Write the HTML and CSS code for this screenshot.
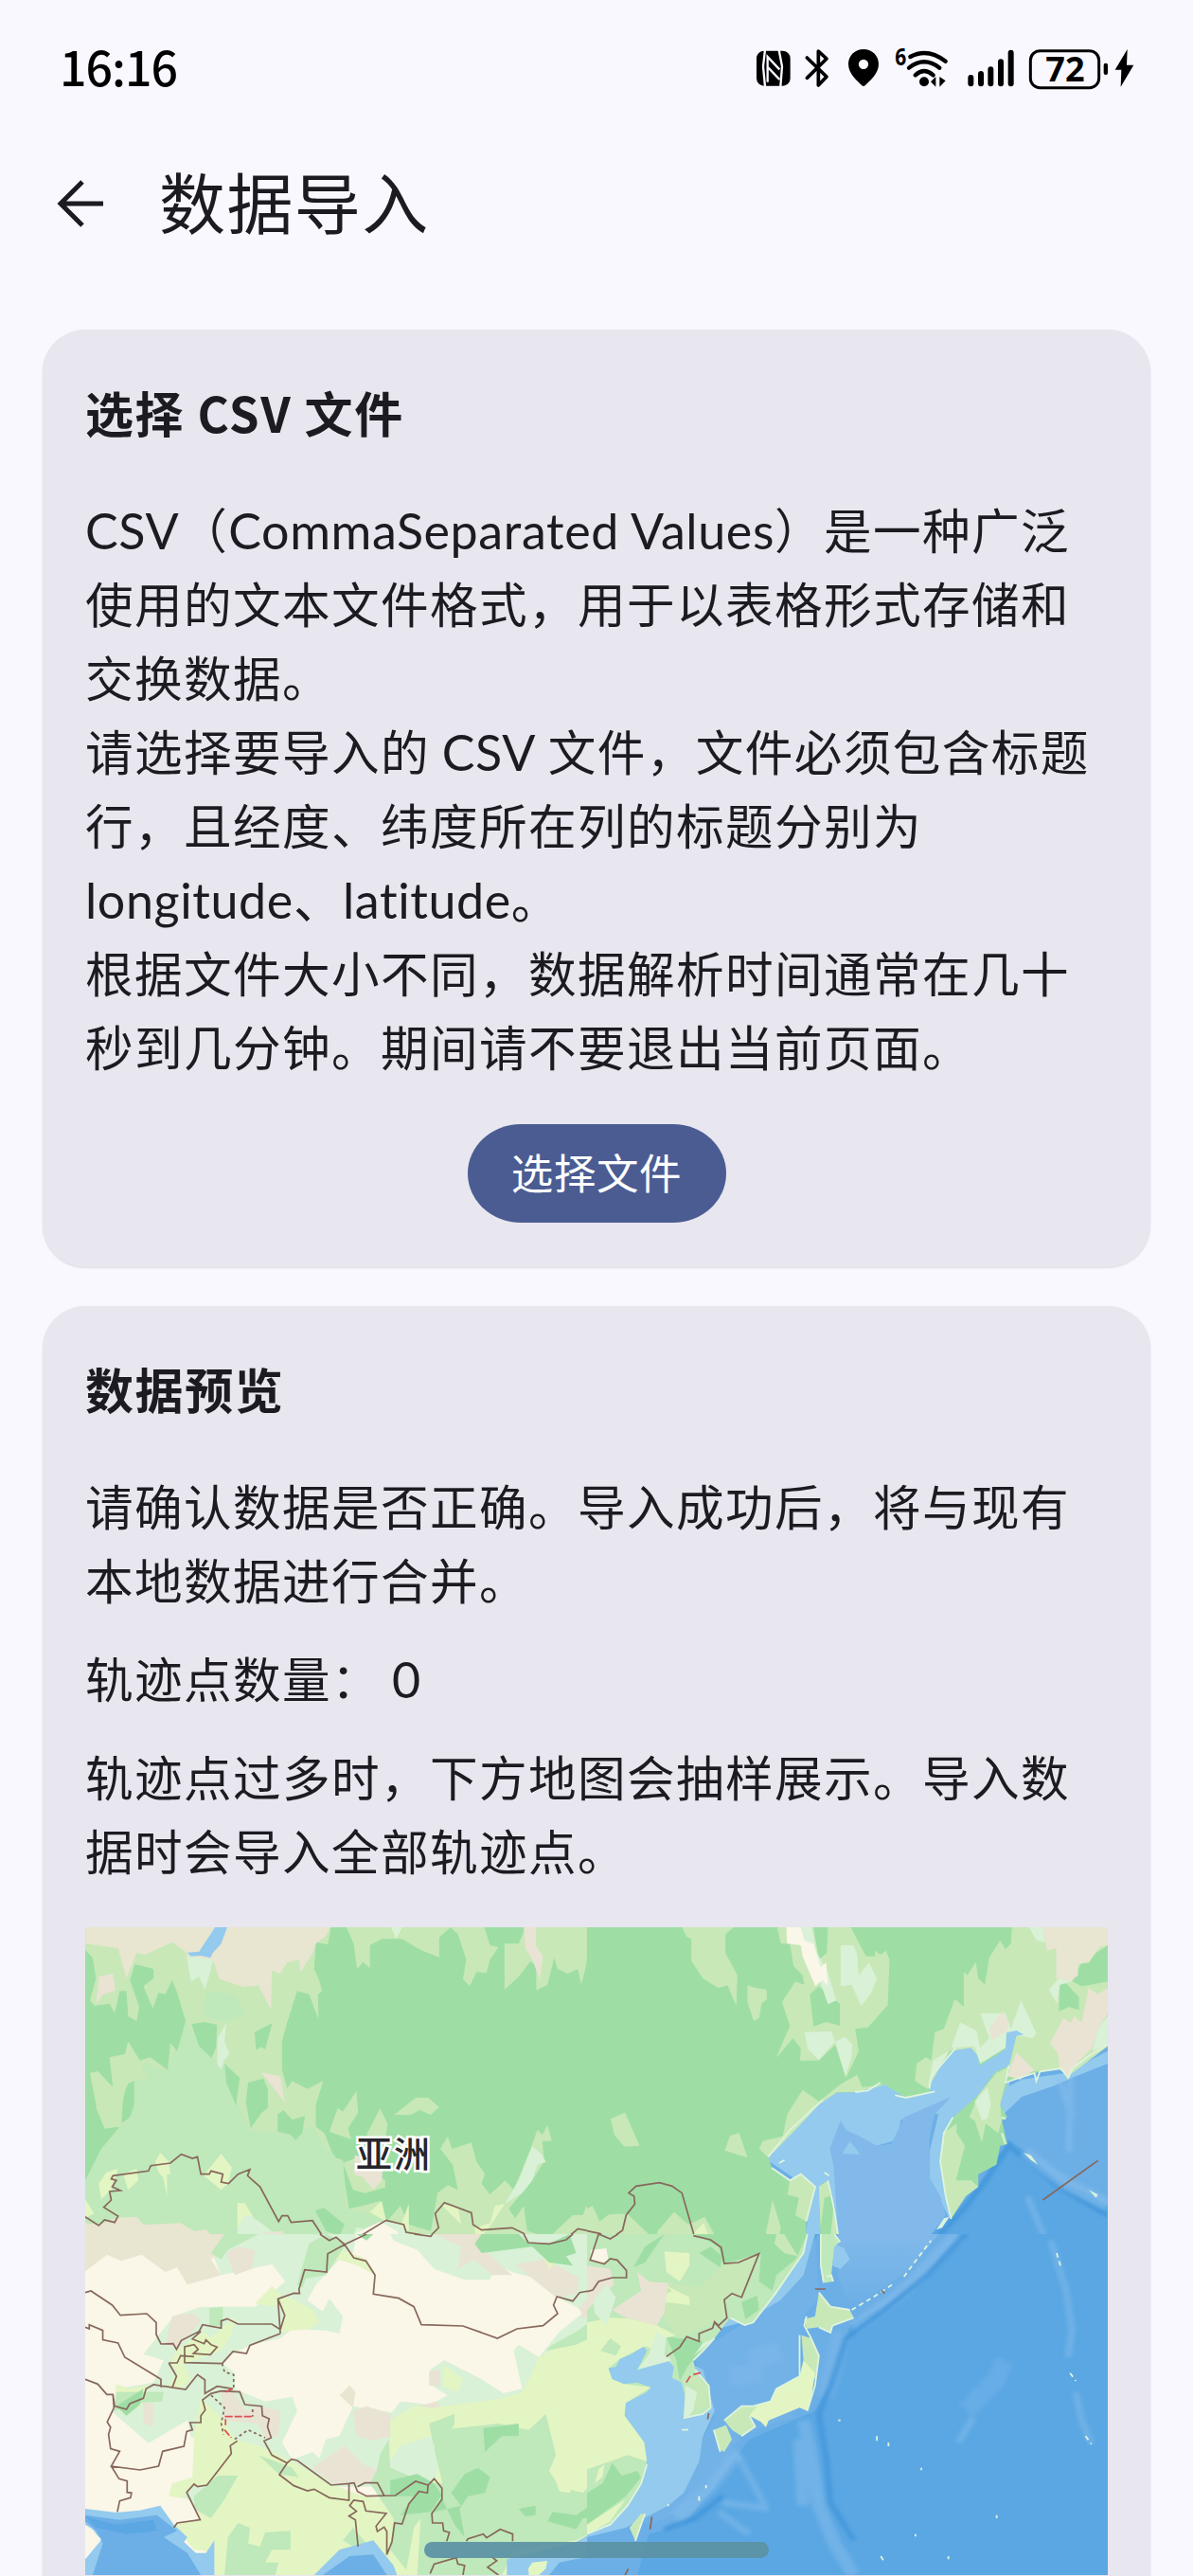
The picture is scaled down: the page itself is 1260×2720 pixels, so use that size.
FILE: index.html
```html
<!DOCTYPE html>
<html lang="zh-CN">
<head>
  <meta charset="UTF-8">
  <meta name="viewport" content="width=device-width, initial-scale=1.0">
  <title>数据导入</title>
  <link rel="stylesheet" href="styles.css">
</head>
<body>
  <div class="status-bar">
    <span class="clock">16:16</span>
    <svg class="status-icons" viewBox="84 60 1200 135">
      <!-- nfc -->
      <rect x="87" y="71" width="107" height="111" rx="24"/>
      <path class="cut" d="M114 68 108 120 114 184M158 68 168 120 163 184M122 170V90L160 130M124 124 160 162"/>
      <!-- bluetooth -->
      <path class="line" d="M247 93 309 153 283 180V72L309 96 247 157"/>
      <!-- location -->
      <path fill-rule="evenodd" d="M426 66c28 0 48 21 48 47 0 31-30 54-43 68q-5 4-10 0c-13-14-43-37-43-68 0-26 20-47 48-47zM426 98a15 15 0 1 0 0 31 15 15 0 0 0 0-31z"/>
      <!-- wifi -->
      <path class="line wifi" d="M574 90Q628 60 686 104M570 125Q618 87 667 125M590 148Q618 122 647 148"/>
      <circle cx="618" cy="169" r="15"/>
      <path d="M655 153V185L639 169zM667 153V185L686 166z"/>
      <text class="wifi-gen" x="526" y="117" textLength="36" lengthAdjust="spacingAndGlyphs">6</text>
      <!-- signal -->
      <path class="bar" d="M766 156V175M798 144V175M829 130V175M861 106V175M893 77V175"/>
      <!-- battery -->
      <rect class="cell" x="955" y="71" width="217" height="117" rx="30"/>
      <rect x="1187" y="110" width="13" height="37" rx="6"/>
      <text class="level" x="1003" y="168">72</text>
      <path d="M1262 66 1223 131H1243L1241 185 1282 116H1260z"/>
    </svg>
  </div>

  <header class="top-bar">
    <svg class="back" viewBox="0 0 52 52"><path d="M28 3 5 26 28 49M5 26H50"/></svg>
    <h1>数据导入</h1>
  </header>

  <main>
    <section class="card">
      <h2>选择 CSV 文件</h2>
      <p><span class="latin">CSV</span>（<span class="latin">CommaSeparated Values</span>）是一种广泛<br>使用的文本文件格式，用于以表格形式存储和<br>交换数据。<br>请选择要导入的 <span class="latin">CSV</span> 文件，文件必须包含标题<br>行，且经度、纬度所在列的标题分别为<br><span class="latin">longitude</span>、<span class="latin">latitude</span>。<br>根据文件大小不同，数据解析时间通常在几十<br>秒到几分钟。期间请不要退出当前页面。</p>
      <button class="pick-btn">选择文件</button>
    </section>

    <section class="card">
      <h2>数据预览</h2>
      <p>请确认数据是否正确。导入成功后，将与现有<br>本地数据进行合并。</p>
      <p>轨迹点数量：<span class="count">0</span></p>
      <p>轨迹点过多时，下方地图会抽样展示。导入数<br>据时会导入全部轨迹点。</p>

      <svg class="map" viewBox="90 2036 1080 684">
        <defs>
          <linearGradient id="okhotsk" x1="0" y1="0" x2="0" y2="1">
            <stop offset="0" stop-color="#81b9ea"/>
            <stop offset="1" stop-color="#6cafe6"/>
          </linearGradient>
        </defs>

        <!-- north west tile -->
        <svg x="80" y="2020" width="560" height="350" viewBox="0 0 1568 1050" preserveAspectRatio="none">
          <rect class="forest" width="1568" height="1050"/>
          <path class="grass" d="M28 48H755L745 103 710 95 705 180 720 215 728 250 716 262 718 340 690 260 655 250 625 350 610 410V500L625 558 640 535 685 560 732 535 710 610V680L735 700 765 780 790 785 795 850 808 940 850 930 900 915 920 980 960 930 985 990 1050 1010 1070 890 1100 865 1130 880 1115 800 1078 750 1100 710 1113 750 1170 730 1185 790 1210 830 1200 860 1225 895 1270 850 1295 880 1345 750 1365 690 1380 705 1395 675 1408 725 1380 725 1385 790 1350 850 1280 940 1300 970 1325 930 1335 1010 1400 1030 1470 960 1500 960 1510 930 1535 970 1568 950V1050H28z"/>
          <path class="meadow" d="M325 350 345 380 400 460 440 490 475 600 515 690 620 700 700 680 740 750 790 790 800 940 880 960 920 985 850 1020 780 1050H28V840L75 750 160 650 175 540 200 480 270 500zM385 250 470 260 500 320 440 350 380 330z"/>
          <path class="forest" d="M28 120 50 145 60 210 42 280 55 297 100 290 115 320 130 250H150L155 330 180 345 188 300 160 215 175 165 230 180V210L200 235 228 305 245 255 265 260 285 215 300 255 325 345 300 440 280 415 272 500 220 460 190 470 155 410 145 450 100 460 110 555 65 505 42 510 65 575 60 620 85 685 130 680 75 750 28 850z"/>
          <path class="forest" d="M342 355 380 348 418 357 415 430 402 462 365 425zM529 380 581 352 560 435 548 427 533 437zM440 480 485 525 474 612 445 540zM510 540 555 527 568 560V620L550 635 517 685 503 600zM597 640 615 628 640 658 678 645 670 700 650 722 635 705 597 695zM708 945 735 937 795 990 780 1025 740 1010zM135 620 150 545 173 535V610L160 650 135 670zM740 705 800 715 830 745 825 780 770 780z"/>
          <path class="grass" d="M42 510 65 505 110 555 105 460 150 450 185 475 215 530 160 530 140 580 135 672 88 687 62 620zM800 48H1128L1150 48H1208L1225 105 1250 112 1225 150 1215 192 1185 190 1165 235 1145 212 1155 150 1130 70 1108 48 1075 80V143L1020 120 965 85 905 85 870 105V178L850 158 832 180 822 100zM1268 100H1310L1330 48H1535L1515 100 1510 165 1495 230 1485 180 1455 195 1425 180 1415 145 1395 230 1362 248V170L1345 155 1310 205 1268 245zM750 695 775 620 790 632 830 567 835 635 805 685 815 720zM860 705 900 622 922 670 915 730zM942 642 1005 588 1042 588 1075 618 1050 642 1017 627 990 643z"/>
          <path class="grass" d="M790 795 825 780 915 850V872L855 890 820 880z"/>
          <path class="mint" d="M328 140H408L400 180 382 245 365 205 340 220zM445 350 440 410 455 450 438 470 430 500 418 480 420 400zM932 48H965L948 85zM1350 742 1380 770 1390 792 1365 800 1350 850 1320 890 1268 925 1310 850zM478 960 505 950 580 1010 560 1050H478zM900 980 960 985 1010 1050H930zM830 1000 850 1000 820 1030z"/>
          <path class="sand" d="M28 48H752L740 75 710 100 700 130 665 190 660 150 625 160 605 195 580 185 578 310 540 232 495 237 425 212 405 150 330 140 325 125 285 95 235 120 205 135 180 130 150 210 125 115 30 100zM28 985 70 990 120 968 180 965 200 990 310 985 350 1010 385 1005 420 1050H28z"/>
          <path class="rose" d="M68 205 110 195 118 248 80 262 60 292zM548 508 605 520 618 602 580 550zM1325 48H1362L1360 105 1382 140 1372 212 1350 150 1330 115zM825 770 910 790 905 850 880 880 850 840 822 830zM520 1040 560 1015 610 1010 640 1050z"/>
          <path class="lemon" d="M235 790 250 762 275 790 280 830 270 830V900L258 840 245 825zM68 860 90 825 125 812 105 880 75 910zM140 830 180 812 185 850 155 880zM378 835 430 765 462 810 450 860 430 880zM478 922 500 922 525 965 500 960 478 1000zM870 950 905 915 918 980zM960 995 985 925 985 1010zM1080 925 1130 935 1140 990zM1180 1000 1225 985 1240 930 1268 925 1235 980 1185 1050zM28 910 55 955 28 970zM1395 1050 1415 1020 1440 1050z"/>
          <path class="cream" d="M780 1050 840 1010 900 980 950 1010 970 1050z"/>
          <path class="shallow" d="M412 48H448L430 100 405 130 398 145 370 138 340 140 330 128 365 125z"/>
          <path class="border" d="M28 965 68 993 85 975 115 983 125 963 83 935 105 912 100 885 132 882 108 870 120 850 105 845 110 835 215 820 222 803 280 795 312 767 345 780 360 775 370 830 395 830 400 820 435 830 430 855 452 860 480 830 515 815 508 835 545 870 600 980 610 962 627 962 637 983 700 977 732 1030 760 1038 770 1025 785 1050M805 1050 918 976 970 990 977 1014 1048 1027 1073 1000 1063 955 1090 920 1170 952 1175 990 1200 1007 1290 1000 1325 1018 1338 1045 1390 1050 1450 1035 1485 1003 1568 1020M1548 1022 1540 1050"/>
          <text class="map-label" transform="scale(2.8 3)" x="296" y="269">亚洲</text>
        </svg>

        <!-- north east tile -->
        <svg x="620" y="2020" width="600" height="350" viewBox="0 0 1568 1050" preserveAspectRatio="none">
          <rect class="ocean" width="1568" height="1050"/>
          <path class="slope" d="M920 1050 1010 960 1090 850 1165 720 1200 740 1320 850 1437 930V420L1250 470 1000 400 600 560 480 780 600 1050z"/>
          <path class="slope" d="M1160 720 1150 600 1200 520 1437 430V870L1380 890 1300 850 1200 750z"/>
          <path class="shallow" d="M490 780 640 560 1050 400 1200 360 1170 520 1150 640 1050 800 1000 970 945 850 945 760 970 640 900 640 865 660 860 720 800 740 700 720 690 820 705 1050H600L620 880z"/>
          <path class="mid" d="M700 660 715 690 760 715 800 740 840 735 875 650 1005 585 960 640 945 720 945 840 975 900 990 960 930 1050H695L680 800 670 750z"/>
          <path class="shallow" d="M705 765 725 725 755 768zM1150 560 1200 530 1320 510 1437 440 1437 480 1350 520 1290 550 1200 585 1150 640z"/>
          <path class="haze" d="M1335 520 1330 760M1300 520 1340 650M1215 900 1270 1050"/>
          <path class="trench" d="M1170 730 1100 850 1040 940 950 1050M1165 740 1300 870 1437 960"/>
          <path class="haze ridge" d="M1205 760 1260 810 1320 860 1437 925"/>
          <path class="coast" d="M1205 762 1225 770 1245 800 1225 785zM1385 880 1410 895 1405 905zM1262 805 1275 812zM965 1005 985 970 1000 965 980 1000z"/>

          <path class="forest" d="M0 48H1437V420L1385 455 1340 495 1328 525 1310 495 1235 510 1180 530 1160 540 1140 610 1160 650 1145 660 1160 735 1140 740 1130 800 1080 830V870L1045 900 1005 972 990 900 975 790 985 700 1010 650 1080 580 1130 500 1165 485 1185 390 1205 385 1185 375 1158 382 1155 435 1085 487 1070 430 1085 420 1018 430 950 520 945 570 880 588 820 545 740 570 690 572 650 595 500 775 510 810 560 850 590 830 630 870 605 980 605 1050H0z"/>
          <path class="forest" d="M640 870 665 850 680 930 697 1050H645z"/>
          <path class="grass" d="M640 870 665 850 670 900 655 905 645 1000zM680 940 697 1050H670zM262 48H405L382 70V130L415 200 412 298 388 232 362 240 320 210 288 155V85L275 78zM443 232 465 240 495 245 497 275 482 290 475 335 460 345 443 285zM525 48H625L640 150 662 130 665 48H728L770 140 795 140 795 122 810 135 825 122 835 150 830 295 775 365 740 370 750 440 715 525 685 420 640 470 588 470 590 430 568 400 522 462 560 360 538 285 575 220 600 230 595 200 570 170 560 100 535 100zM1173 48H1437V425L1328 520 1300 495 1235 505 1180 510 1150 485 1075 560 1155 435 1150 400 1090 470 1060 430 1000 440 940 560 905 535 910 480 935 460 950 470 960 380 985 370 1015 275 1040 300V190L1050 200 1073 158 1080 210 1098 230 1110 145 1140 90 1155 118 1170 100zM65 655 105 635 145 740 103 743 75 705zM380 755 395 708 420 700 443 778zM553 640 595 563 640 600 700 545 745 515 760 555 830 545 740 570 690 570 640 610 575 690 500 778 475 750 485 725 540 710zM985 700 1020 670 1020 700 1043 740 1018 850 1060 850 1080 870 1045 900 1005 970 990 900 975 790zM1080 580 1130 510 1165 490 1140 610 1145 660 1135 700 1100 670 1090 730 1070 660 1055 650zM560 850 590 830 630 870 605 980 575 960 585 905 553 895zM488 1050 512 912 535 1000 525 1050zM0 940 15 930 35 980 60 958 110 955 175 1025 160 1050H0zM185 1050 195 1010 240 950 280 990 325 965 365 1050z"/>
          <path class="forest" d="M1305 230 1322 225 1358 270V310L1330 300 1302 315zM615 260 640 235 698 290V360L660 348 625 362zM1365 160 1437 105V220L1390 230 1365 235 1340 220z"/>
          <path class="mint" d="M590 48H620L635 130 665 190 688 280 665 292 640 210 600 110zM700 105H735L745 130 750 200 778 160 800 210 785 255 757 298 730 230 700 235zM600 380 675 378 685 410 640 468 610 435zM685 410 712 395 732 420 730 460 713 520zM1005 430 1030 350 1075 375 1085 430 1110 400 1085 320 1155 320 1170 370 1198 278 1240 385 1230 400 1185 390 1155 430 1085 480 1070 425zM1220 48H1258L1265 95 1240 90zM1275 245 1305 205 1340 220 1305 230 1297 290zM1070 600 1105 555 1115 610 1105 655 1090 660zM1437 330 1410 370 1395 440 1437 420zM940 560 955 470 975 455 1000 440 960 510z"/>
          <path class="sand" d="M1258 48H1437V105L1415 110 1385 160 1355 165V200L1335 218 1295 210V115L1270 122z"/>
          <path class="rose" d="M1385 240 1410 260 1437 240V320L1410 370 1395 430 1355 475 1328 520 1305 495 1300 450 1278 415 1315 335 1335 350 1345 330 1365 350zM1110 370 1145 315 1165 350 1160 375 1118 405zM1160 520 1185 445 1235 500 1195 530z"/>
          <path class="cream" d="M550 48H590L600 90 625 100 645 175 660 160 665 235 650 215 630 235 595 140 590 105 552 100z"/>
          <path class="lemon" d="M292 1020 322 985 340 1035zM35 1045 90 1040 90 1050z"/>
          <!-- head of Shelikhov gulf -->
          <path class="shallow" d="M1085 487 1155 435 1158 382 1185 375 1205 388 1185 392 1165 487 1130 505 1080 560z"/>
          <path class="coastline" d="M510 810 560 850 590 830 630 870 605 980M500 775 560 690 650 595M740 570 775 565 810 540 M850 580 880 588 960 568M945 560 950 520 1018 430M1010 650 985 700 975 790 990 900 1005 972M1145 650 1155 655M1145 700 1155 735M1165 485 1155 540 1180 530 1235 510 1240 535 1250 505 1308 495 1328 525 1340 495 1385 455 1437 420M665 850 680 930 697 1050M530 795 545 785M655 825 668 835"/>
          <path class="border" d="M0 1010 35 1018 62 1037 98 1008 108 960 132 925 130 900 115 890 135 868 200 857 235 868 262 890 295 1022 345 1040 357 1050M35 1018 27 1050M1258 912 1410 787"/>
        </svg>

        <!-- south west tile -->
        <svg x="80" y="2360" width="560" height="360" viewBox="0 0 1568 1080" preserveAspectRatio="none">
          <rect class="cream" width="1568" height="1080"/>
          <path class="mint" d="M380 0H830L820 60 780 80 710 160 685 210 730 245 750 205 790 260 780 315 740 305 640 300 605 330 520 350 460 380 435 410 470 440V490L560 530 640 515 655 560 610 660 640 715 700 690 720 710 740 650 780 640 820 545 935 565 960 530 1050 540 1100 510 1045 475 1048 430 1090 400 1200 460 1265 505 1320 490 1295 370 1310 350 1370 390 1430 310 1500 250 1480 230 1440 210 1415 175 1360 140 1290 120 1240 95 1225 145 1150 145 1060 110 1010 50 940 20 930 0H1568V700L1100 800H640L340 640 330 590 215 662 110 565 120 490 230 470 260 400 200 380 260 300 290 260 370 230 530 230 620 150 580 95 430 130z"/>
          <path class="sand" d="M28 0H440L420 60 400 80 430 130 330 160 300 105 265 120 195 65 135 85 92 65 28 118zM780 510 810 480 827 500 820 550z"/>
          <path class="rose" d="M265 350 285 260 345 250 370 270 340 320 300 360zM430 500 460 490 500 560 550 545 605 560 600 640 560 650 540 600 440 590zM700 740 795 670 850 730 930 760 900 790H760zM820 560 860 545 932 570 930 640 880 655 830 640zM1045 435 1075 430 1080 480H1045zM1015 545 1065 530 1090 560 1020 580zM1060 0H1200L1220 60 1290 130 1230 130 1180 80 1130 110 1140 40zM1300 95 1390 80 1490 140 1480 190 1420 200 1350 140zM1490 230 1568 140V220L1500 270zM200 530 230 540 228 610 200 600zM445 60 480 40 530 50 520 110 470 130z"/>
          <path class="lemon" d="M745 90 790 50 860 80 885 130 835 100 760 75zM590 210 620 195 700 240 720 280 690 300 605 310 620 255zM530 220 580 165 605 190 590 230zM300 365 380 310 400 330 470 260 460 320 430 370 320 410 340 460 310 490 275 480 300 440 280 405zM370 520 440 590 470 650 540 670 640 720 750 790 850 830 930 840 970 800 1050 790 1080 700 930 720 930 590 1000 545 1060 550 1200 530 1265 520 1320 500 1350 440 1370 390 1430 350 1500 330 1568 370V1080H410V975L390 1005 350 1000 290 920 370 900 340 840 275 830 285 790 345 770 350 640zM118 475 160 490 210 480 190 550 120 540zM1360 30 1410 50 1430 20 1470 40 1400 110zM1090 415 1145 460 1130 500 1085 480z"/>
          <path class="mint" d="M930 720 960 670 1050 640 1078 730 1060 780 940 770zM315 830 350 800 400 790 380 840 345 850z"/>
          <path class="meadow" d="M1060 680 1080 620 1170 610 1250 600 1340 620 1390 570 1420 700 1400 750 1430 800 1500 820 1568 740V920L1480 970 1300 1000 1260 1080H990L930 1000 940 900 870 790 890 750 900 700 925 650 930 740 1040 790 1085 790zM120 500 260 500 255 530 180 535 115 560zM350 830 420 765 480 765 440 840 400 900 350 870zM450 960 480 915 515 930 510 980 545 990 560 945 635 940V1000L580 1000 560 1040 600 1040 590 1080H440zM690 30 740 0 800 30 740 130 680 140 670 170 655 160zM400 60 440 0H540L450 50 430 80zM1045 600 1120 570 1120 600 1080 680 1058 670zM540 700 640 740 660 770 600 760zM1410 350 1480 310 1530 270 1560 310 1480 350 1390 370zM790 970 820 930 860 980 820 990zM395 235 435 230V290H395z"/>
          <path class="forest" d="M930 780 1010 760 1060 790 1085 830 1060 880 1140 860 1110 820 1150 760 1190 740 1225 770 1210 820 1160 830 1135 870 1150 960 1120 920 1080 830 1050 880 960 890 1000 830 930 830zM1205 615 1310 600 1310 640 1260 640 1210 690zM1310 870 1360 860V890L1330 895zM1395 910 1410 880 1480 890 1520 860 1530 770 1568 735V890L1500 900 1480 935zM1200 0H1310L1340 30 1400 30 1460 0 1480 60 1450 70 1470 100 1400 90 1350 40 1200 60 1180 30zM120 545 200 490 190 540 150 575zM830 0H880L860 20z"/>
          <path class="lemon" d="M1000 930 1020 900 1010 1080H975zM1410 750 1450 745 1490 755 1540 740 1530 795 1480 790 1460 820 1430 815z"/>
          <path class="shallow" d="M28 870 120 882 190 875 250 860 290 920 330 960 320 975 355 1010 385 1010 410 970V1080H28V1030L75 970 50 935 28 920zM705 1080 780 1000 880 970 940 1050 950 1080zM1275 1080V1030L1480 975 1568 920V1080z"/>
          <path class="slope" d="M28 890 130 905 240 890 300 940 260 960 330 1010 370 1080H50L80 980 60 940 28 910zM730 1080 810 1020 880 1015 920 1080zM1400 1080 1430 1040 1568 1010V1080z"/>
          <path class="ocean" d="M28 895 120 920 230 905 240 940 150 950 60 930z"/>
          <path class="cream" d="M28 920 75 965 28 1030z"/>
          <path class="lemon" d="M1338 1060 1350 1040 1395 1035 1390 1060 1370 1080H1340z"/>
          <path class="border" d="M28 185 45 180 108 225 132 257 210 252 238 280V318L252 348 288 347 298 365 312 337 365 308 375 287 430 298V275L448 268 480 285H580L605 302M605 315 598 205 645 187 662 188 660 175 677 113 742 120 745 62 795 33 860 0M795 33 770 10 750 20 722 0M795 33 822 75 858 85 885 130 880 190 955 203 1000 230 1022 287 1145 291 1247 330 1305 300 1382 290 1425 252 1413 225 1423 198 1470 212 1490 185 1532 177 1545 150 1568 140M605 315 515 352 505 378 465 372 433 410 322 407V357L350 350 362 365 348 378 398 382 418 358 400 350 385 335 380 347 345 332 370 308M598 205 618 257 605 302M28 295 40 300 40 287 80 305V335L125 345 145 390 252 460V485M275 408H300L310 385 350 388M275 408 298 450 285 488M28 460 65 475 92 508 110 508 115 545 150 555 160 537 200 520 208 490 230 477 325 492 360 445 382 462V505L418 482 465 490M110 508 113 550 93 595 103 612 97 635 103 680 130 688 105 735 190 747 245 735 257 688 320 672 328 625 345 620 338 597 370 597 370 575 383 557 375 525 400 505 430 497 485 500 500 540 550 545 552 575 572 585 567 610 578 645 557 655 580 700 625 725 638 713 655 717 755 795 808 790V843L750 835 705 808 685 813 645 797 602 762 625 725M105 735 128 775 152 782V818L165 820 162 835 130 845 123 880M290 930 300 915 368 905 328 818 350 792 360 800 388 795 460 695 457 670 478 655M808 790 823 788 833 815 860 830 945 828 1005 783 1042 795 1060 775 1083 805V840L1053 885 1055 915H1085L1088 940 1105 945 1097 973M833 800 855 788H892L912 828M835 990 827 905 808 893 830 878 810 860 822 843 850 847 858 877 918 885 888 925 892 942 912 928 920 942 920 1015 935 975 943 915 965 918 985 855 1015 815 1040 820 1042 795M1155 973 1160 965 1205 950 1215 962 1255 935 1292 950V973M1325 0 1338 27 1400 31 1450 18 1470 0M1550 0 1520 82 1568 95M1048 1075 1060 1045 1125 1025 1130 1045 1150 1050 1145 1080M1230 1022 1245 1035 1218 1055 1250 1080M1000 0 1050 7 1055 0"/>
          <path class="border dashed" d="M433 410 440 437 467 445V490L430 500M400 510 440 550 430 600 437 635M470 650 510 620 560 645M523 555V578"/>
          <path class="border disputed" d="M520 578H443V605M440 620 460 645M460 490 445 500"/>
        </svg>

        <!-- south east tile -->
        <svg x="620" y="2360" width="640" height="360" viewBox="0 0 1568 1080" preserveAspectRatio="none">
          <rect class="ocean" width="1568" height="1080"/>
          <path class="slope" d="M600 0H960L860 160 680 290 640 450 590 560 420 650 330 800 250 920 160 950 130 1080H0V950L130 700 260 520 280 380 420 270z"/>
          <path class="okhotsk" d="M650 0H910L830 120 740 190 680 230 650 140z"/>
          <path class="slope faint" d="M330 300 480 180 560 130 590 0 600 200 560 260 540 480 500 540 540 580 480 600 400 640 320 760 240 880 160 920 100 880 280 700 330 580 280 400z"/>
          <path class="shallow" d="M60 370 150 340 300 430 330 560 300 640 290 720 250 820 210 860 100 930 0 960V400zM340 300 400 280 500 210 560 130 590 0H560L480 180 370 265zM640 30 665 45 680 80 655 110 635 100z"/>
          <path class="haze soft" d="M660 310 640 420 615 520M420 400 500 370M370 450 450 440M1080 400 1060 460 980 560"/>
          <path class="haze ridge" d="M560 590 580 700 600 860 640 980 690 1080M550 650 560 860M690 300 820 180 960 0M230 900 320 800 390 690"/>
          <path class="haze" d="M390 700 460 860M350 850 470 870M1200 20 1240 180 1255 300 1245 390M1265 500 1280 590 1305 665M960 660 1000 580M340 880 420 950"/>
          <path class="trench" d="M980 0 880 130 760 250 670 330 630 480 600 570 620 720 630 850 690 970M350 830 280 900 200 935"/>
          <path class="coastline specks" d="M685 240 740 200 790 160M820 135 890 20M1215 60 1225 100M1250 440 1265 465M1290 640 1305 665M210 855V862M290 830V845M308 795V805M865 740V748M750 640V655M780 660V672M650 590H656M760 1020 770 1040M850 950V958M935 1020V1030M1060 890V900"/>

          <path class="meadow" d="M0 0H570L560 60 480 200 430 280 408 288 370 265 330 330 275 400 280 430 315 480 318 550 300 570 250 585 255 520 245 470 220 455 225 420 205 395 150 400 130 430 155 370 145 355 115 380 85 395 75 420 55 425 65 460 95 475 130 470 165 485 155 500 100 535 97 575 130 630 148 660 145 690 155 730 140 790 105 860 60 920 0 950zM605 0H640L655 25 640 40 632 130 637 150 610 155 605 60z"/>
          <path class="grass" d="M290 170 360 90 445 60 400 200 360 200 360 260 240 330 200 270 170 200 200 150z"/>
          <path class="forest" d="M280 0H570L540 80 490 130 480 180 445 150 450 60 355 95 340 40zM400 215 440 195 445 240 410 270zM290 60 320 40 350 70 345 105zM205 325 300 340 290 375 260 420 240 465 230 395zM120 105 150 40 200 0 150 90zM0 820 40 790 65 725 90 765 130 750 140 770 100 830 0 920z"/>
          <path class="grass" d="M490 0H510L545 70 510 60 485 30zM480 200 540 80 560 60 490 190z"/>
          <path class="lemon" d="M0 280 60 265 150 270 230 320 200 330 180 370 150 355 85 395 55 425 65 460 95 475 165 485 100 535 97 575 148 660 155 720 105 700 60 720 0 745zM200 55 265 60 265 100 240 150 205 120zM200 160 265 200V225L170 210 220 180zM0 920 100 840 60 910 0 950zM30 745 45 730 40 770 20 790z"/>
          <path class="rose" d="M65 240 140 180 130 120 160 150 210 155 200 250 180 290 100 265zM0 100 60 110 70 160 0 240z"/>
          <path class="cream" d="M10 50 50 45 55 80 35 95 8 80z"/>
          <path class="mint" d="M15 210 50 160 75 200 50 290 20 250zM180 310 205 330 200 380 220 400 130 430 160 380zM280 380 330 330 300 345 270 395zM250 580 255 480 285 500 285 540 265 575z"/>
          <path class="meadow" d="M35 370 60 330 88 355 75 385z"/>
          <path class="grass" d="M260 465 285 445 315 490 310 550 275 555 285 500zM600 185 630 230 680 240 690 265 635 290 630 312 600 295 568 300 562 270 590 260zM555 320 580 330 600 385 590 460 560 400zM110 930 140 885 150 890 125 972z"/>
          <path class="lemon" d="M560 400 590 440 580 520 570 560 550 550 470 590 463 612 450 595 420 575 430 545 475 530 490 490 550 450z"/>
          <path class="grass" d="M355 590 400 545 440 545 420 575 435 610 400 640 375 620zM328 620 360 605 375 650 355 690 340 680z"/>
          <path class="coastline" d="M570 0 560 60 480 200 430 280 408 288 370 265M330 330 300 370 275 400M280 430 315 480 320 550 300 570 250 582M605 0V100L612 150M637 150 632 130 620 135M640 0 655 25M600 185 630 230 680 240M690 265 635 290 630 312 600 295M568 260 562 290 578 325 600 385 590 480 570 560M550 320 550 450 490 490 475 530 430 545 400 545 355 590M420 575 435 610 400 640M328 620 345 690M245 620H262M150 885 125 972M155 730 140 790 105 860 60 920 0 950"/>
          <path class="border" d="M30 0 60 15 80 0M30 0 8 82 45 95 60 78 78 82 102 115V138H65L30 150 15 177 0 182M275 5 320 18 347 42 355 93 392 90 445 62 400 200 375 188 355 208 362 265 340 290 330 278 325 298 290 315V340L258 325 240 358 205 388M330 280 348 303M590 174H617M762 178 770 188M168 895 163 935M107 1060 98 1080M315 567 312 587"/>
          <path class="border disputed" d="M257 470 268 448M275 445 297 438"/>
        </svg>
      </svg>
    </section>
  </main>

  <div class="gesture-bar"></div>
</body>
</html>
```
FILE: styles.css
```css
:root {
  --bg: #f9f8ff;
  --card: #e8e6ef;
  --text: #1b1b21;
  --primary: #4b5c92;
}

* {
  margin: 0;
  padding: 0;
  box-sizing: border-box;
}

body {
  position: relative;
  height: 2720px;
  overflow: hidden;
  background-color: var(--bg);
  color: var(--text);
  font-family: 'Noto Sans CJK SC', sans-serif;
}

.status-bar {
  display: flex;
  justify-content: space-between;
  align-items: center;
  height: 144px;
  padding: 0 62px 0 63px;
}

.clock {
  padding-bottom: 6px;
  font-size: 50px;
  font-weight: 500;
  letter-spacing: -1px;
  color: #000;
}

.status-icons {
  width: 400px;
  height: 45px;
  overflow: visible;
}

.status-icons .cut {
  fill: none;
  stroke: var(--bg);
  stroke-width: 7;
}

.status-icons .line,
.status-icons .bar {
  fill: none;
  stroke: #000;
  stroke-width: 11;
  stroke-linecap: round;
  stroke-linejoin: round;
}

.status-icons .wifi {
  stroke-width: 13;
}

.status-icons .bar {
  stroke-width: 18;
}

.status-icons .cell {
  fill: none;
  stroke: #000;
  stroke-width: 9;
}

.status-icons text {
  font-family: 'Open Sans', sans-serif;
  font-weight: 700;
}

.wifi-gen {
  font-size: 74px;
}

.level {
  font-size: 108px;
}

.top-bar {
  display: flex;
  align-items: center;
  gap: 56px;
  height: 142px;
  padding-left: 58px;
}

.back {
  width: 54px;
  height: 52px;
  fill: none;
  stroke: var(--text);
  stroke-width: 5;
}

.top-bar h1 {
  padding-bottom: 7px;
  font-size: 70px;
  font-weight: 400;
  letter-spacing: 1.4px;
  line-height: 100px;
}

main {
  display: flex;
  flex-direction: column;
  gap: 41px;
  padding: 62px 45px 0;
}

.card {
  display: flex;
  flex-direction: column;
  gap: 26px;
  padding: 48px 45px 47px;
  background-color: var(--card);
  border-radius: 45px;
  box-shadow: 0 1px 2px rgba(0, 0, 0, 0.12);
}

.card h2 {
  margin-bottom: 19px;
  font-size: 51px;
  font-weight: 700;
  letter-spacing: 1.6px;
  line-height: 78px;
}

.card p {
  font-size: 50.6px;
  letter-spacing: 1.4px;
  line-height: 78px;
  white-space: nowrap;
}

.latin,
.count {
  font-family: Lato, sans-serif;
  font-size: 52px;
  line-height: 1;
  letter-spacing: 0.6px;
}

.count {
  margin-left: 12px;
}

.pick-btn {
  align-self: center;
  width: 273px;
  height: 104px;
  margin-top: 18px;
  padding-bottom: 5px;
  border: none;
  border-radius: 56px / 52px;
  background-color: var(--primary);
  color: #fff;
  font-family: inherit;
  font-size: 44.5px;
  letter-spacing: 0.6px;
}

.map {
  width: 1080px;
  height: 684px;
  margin-top: 17px;
}

/* land */
.forest { fill: #9edea5; }
.meadow { fill: #bfe8bb; }
.grass { fill: #c8e8b8; }
.mint { fill: #d9f1d6; }
.lemon { fill: #e3f5c2; }
.sand { fill: #e8e5d1; }
.rose { fill: #e9e3d3; }
.cream { fill: #faf6e8; }
.coast { fill: #dcf2e0; }

/* water */
.ocean { fill: #5aa7e3; }
.slope { fill: #6cafe6; }
.mid { fill: #81b9ea; }
.shallow { fill: #93caee; }
.okhotsk { fill: url(#okhotsk); }

.faint {
  fill: #83baeb;
  opacity: 0.3;
}

.haze,
.trench,
.coastline,
.border {
  fill: none;
  vector-effect: non-scaling-stroke;
}

.haze {
  stroke: #8fc0ee;
  stroke-width: 7;
  stroke-opacity: 0.45;
  filter: blur(6px);
}

.ridge {
  stroke-width: 14;
}

.soft {
  stroke-width: 20;
  stroke-opacity: 0.25;
}

.trench {
  stroke: #3f93d9;
  stroke-width: 5;
  stroke-opacity: 0.8;
  filter: blur(5px);
}

.coastline {
  stroke: #dff4dd;
  stroke-width: 1.8;
}

.specks {
  stroke-dasharray: 5 4;
}

.border {
  stroke: #87685b;
  stroke-width: 1.7;
}

.dashed {
  stroke-dasharray: 3 3;
}

.disputed {
  stroke: #dc5055;
  stroke-dasharray: 8 2;
}

.map-label {
  fill: #26262b;
  stroke: #fff;
  stroke-width: 5;
  paint-order: stroke;
  font-size: 38px;
  font-weight: 500;
  letter-spacing: 2px;
}

.gesture-bar {
  position: absolute;
  left: 448px;
  bottom: 19px;
  width: 364px;
  height: 17px;
  border-radius: 9px;
  background-color: rgba(91, 145, 164, 0.92);
}
```
